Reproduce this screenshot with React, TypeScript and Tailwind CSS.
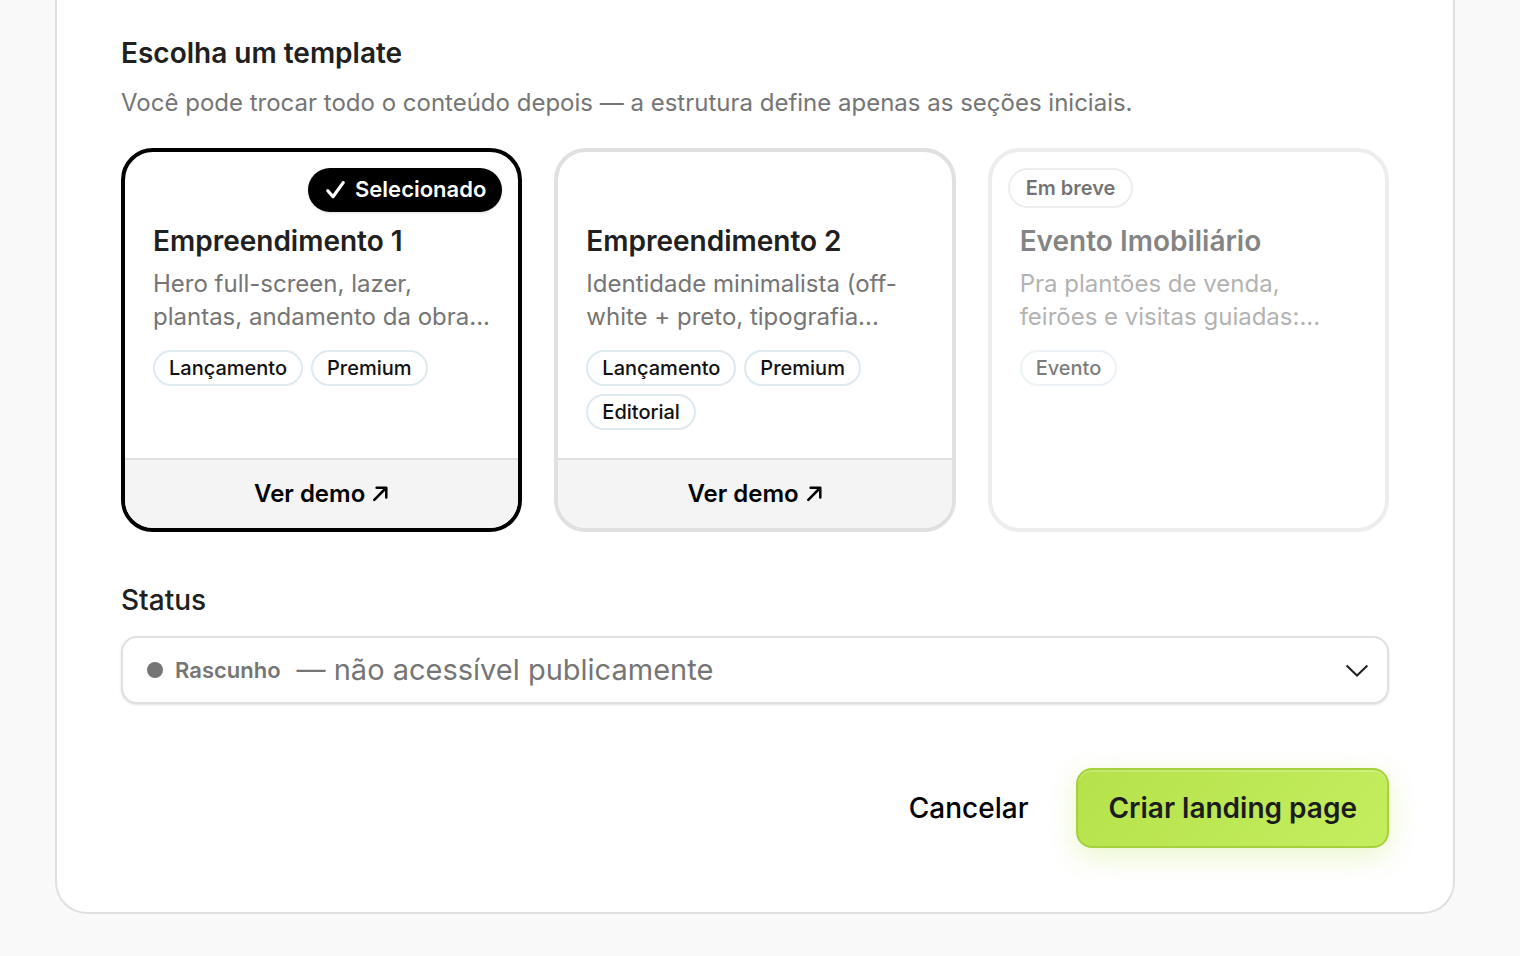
import { useState } from 'react';

interface Template {
  id: string;
  name: string;
  description: string;
  tags: string[];
  comingSoon?: boolean;
}

const templates: Template[] = [
  {
    id: 'empreendimento-1',
    name: 'Empreendimento 1',
    description: 'Hero full-screen, lazer, plantas, andamento da obra...',
    tags: ['Lançamento', 'Premium'],
  },
  {
    id: 'empreendimento-2',
    name: 'Empreendimento 2',
    description: 'Identidade minimalista (off-white + preto, tipografia...',
    tags: ['Lançamento', 'Premium', 'Editorial'],
  },
  {
    id: 'evento',
    name: 'Evento Imobiliário',
    description: 'Pra plantões de venda, feirões e visitas guiadas:...',
    tags: ['Evento'],
    comingSoon: true,
  },
];

const statuses = [
  { value: 'draft', label: 'Rascunho', hint: 'não acessível publicamente' },
];

function CheckIcon() {
  return (
    <svg
      className="w-[23px] h-6"
      viewBox="0 0 23 24"
      fill="none"
      stroke="currentColor"
      strokeWidth="3.2"
      strokeLinecap="round"
      strokeLinejoin="round"
      aria-hidden="true"
    >
      <path d="M3.8 13.8 9 19.8 19.2 5.6" />
    </svg>
  );
}

function ArrowIcon() {
  return (
    <svg
      className="w-4 h-4"
      viewBox="0 0 16 16"
      fill="none"
      stroke="currentColor"
      strokeWidth="2.5"
      strokeLinecap="round"
      strokeLinejoin="round"
      aria-hidden="true"
    >
      <path d="M1.3 13.9 13 2M3.6 1.7h9.7v9.7" />
    </svg>
  );
}

function ChevronIcon() {
  return (
    <svg
      className="w-8 h-8"
      viewBox="0 0 32 32"
      fill="none"
      stroke="currentColor"
      strokeWidth="2"
      aria-hidden="true"
    >
      <path d="M26.4 11.5 16 21.5 5.6 11.5" />
    </svg>
  );
}

interface TemplateCardProps {
  template: Template;
  selected: boolean;
  onSelect: () => void;
}

function TemplateCard({ template, selected, onSelect }: TemplateCardProps) {
  const { name, description, tags, comingSoon } = template;

  return (
    <article
      className={`
        relative flex flex-col overflow-hidden rounded-[32px] border-4 bg-white
        ${selected ? 'border-black' : 'border-[#e0e0e0]'}
        ${comingSoon ? 'opacity-55' : ''}
      `}
    >
      <button
        type="button"
        onClick={onSelect}
        disabled={comingSoon}
        aria-pressed={selected}
        className="flex flex-1 flex-col items-start px-7 pt-[71px] pb-7 text-left"
      >
        <span className="text-[28px] leading-9 font-semibold text-[#202020]">{name}</span>
        <span className="mt-2 text-2xl leading-[33px] text-[#757575]">{description}</span>
        <span className="mt-[17px] flex flex-wrap gap-2">
          {tags.map((tag) => (
            <span
              key={tag}
              className="rounded-full border-2 border-[#dfe9f0] px-3.5 py-0.5 text-xl leading-7 font-medium text-[#111111]"
            >
              {tag}
            </span>
          ))}
        </span>
      </button>

      {!comingSoon && (
        <a
          href="#demo"
          className="flex items-center justify-center gap-2 border-t-2 border-[#e0e0e0] bg-[#f4f4f4] py-[18px] text-2xl leading-8 font-semibold text-black"
        >
          Ver demo
          <ArrowIcon />
        </a>
      )}

      {selected && (
        <span className="absolute top-4 right-4 flex items-center gap-2 rounded-full bg-black px-4 pt-[5px] pb-[7px] text-[22px] leading-8 font-semibold text-white shadow-sm">
          <CheckIcon />
          Selecionado
        </span>
      )}

      {comingSoon && (
        <span className="absolute top-4 left-4 rounded-full border-2 border-[#e0e0e0] bg-white px-4 py-1 text-xl leading-7 font-semibold text-black">
          Em breve
        </span>
      )}
    </article>
  );
}

export default function App() {
  const [selectedId, setSelectedId] = useState('empreendimento-1');
  const [status, setStatus] = useState('draft');
  const current = statuses.find((item) => item.value === status) ?? statuses[0];

  return (
    <div className="min-h-screen bg-[#f9f9f9] pr-[65px] pb-[42px] pl-[55px] font-['Inter',sans-serif]">
      <form className="rounded-b-[32px] border-2 border-t-0 border-[#e0e0e0] bg-white px-16 pt-8 pb-16">
        <h2 className="text-[28px] leading-[42px] font-semibold text-[#202020]">Escolha um template</h2>
        <p className="mt-[11px] text-2xl leading-9 text-[#757575]">
          Você pode trocar todo o conteúdo depois — a estrutura define apenas as seções iniciais.
        </p>

        <div className="mt-[27px] grid grid-cols-3 gap-8">
          {templates.map((template) => (
            <TemplateCard
              key={template.id}
              template={template}
              selected={template.id === selectedId}
              onSelect={() => setSelectedId(template.id)}
            />
          ))}
        </div>

        {/* Status */}
        <label htmlFor="status" className="mt-12 block text-[28px] leading-10 font-medium text-[#202020]">
          Status
        </label>
        <div className="relative mt-4 flex h-17 items-center rounded-2xl border-2 border-[#e0e0e0] bg-white pr-3.5 pl-6 text-[#757575] shadow-sm">
          <span className="mr-3 h-4 w-4 rounded-full bg-[#757575]" />
          <span className="text-[22px] font-semibold">{current.label}</span>
          <span className="ml-4 flex-1 text-[29px]">— {current.hint}</span>
          <span className="text-[#202020]">
            <ChevronIcon />
          </span>
          <select
            id="status"
            value={status}
            onChange={(event) => setStatus(event.target.value)}
            className="absolute inset-0 w-full cursor-pointer opacity-0"
          >
            {statuses.map((item) => (
              <option key={item.value} value={item.value}>
                {item.label}
              </option>
            ))}
          </select>
        </div>

        {/* Ações */}
        <div className="mt-16 flex items-center justify-end gap-4">
          <button type="button" className="h-20 px-8 text-[28px] font-medium text-black">
            Cancelar
          </button>
          <button
            type="button"
            className="h-20 rounded-2xl border-2 border-[#a5d13c] bg-linear-135 from-[#b5e24a] to-[#c5ee5f] px-[30px] text-[28px] font-semibold text-[#1c1c1c] shadow-[inset_0_2px_0_rgba(255,255,255,0.2),0_8px_28px_rgba(181,226,74,0.3)]"
          >
            Criar landing page
          </button>
        </div>
      </form>
    </div>
  );
}
